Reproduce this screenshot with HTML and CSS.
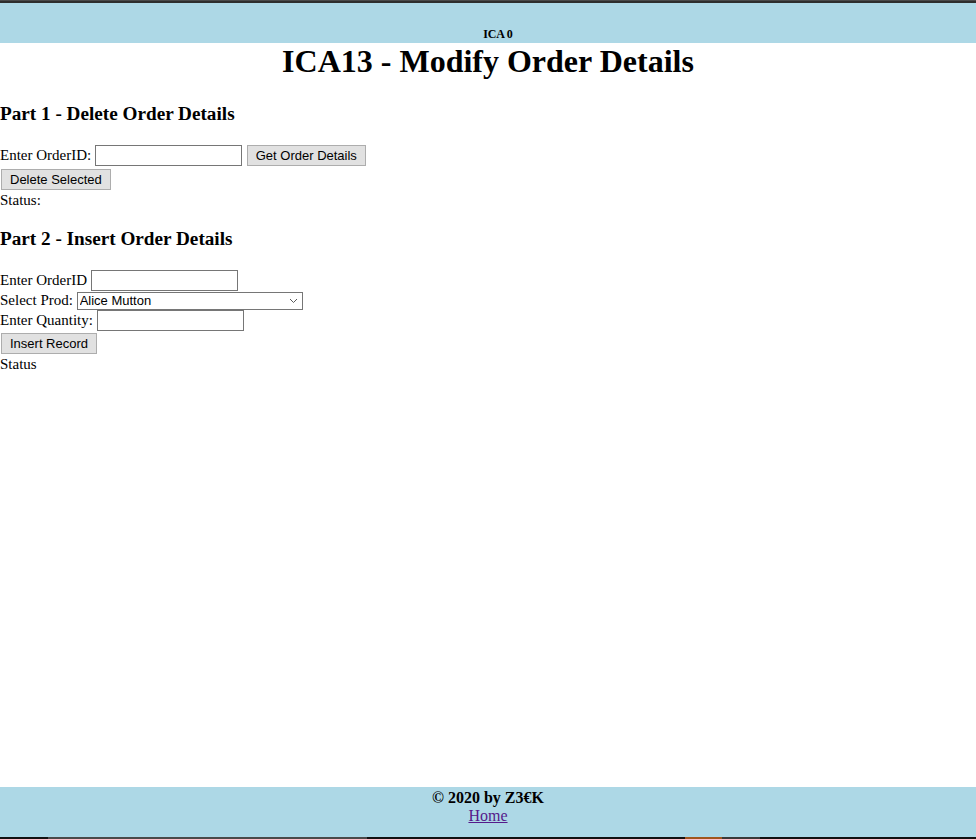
FILE: index.html
```html
<!DOCTYPE html>
<html>
<head>
<meta charset="utf-8">
<title>ICA13 - Modify Order Details</title>
<link rel="stylesheet" href="styles.css">
</head>
<body>
<div class="frame-top"></div>
<header class="banner"><h6 class="banner-title">ICA 0</h6></header>
<main class="content">
  <h1 class="page-title">ICA13 - Modify Order Details</h1>
  <section class="part part-first">
    <h3 class="part-title">Part 1 - Delete Order Details</h3>
    <div class="row">Enter OrderID: <input class="field" type="text"> <button class="btn" type="button">Get Order Details</button></div>
    <div class="row"><button class="btn" type="button">Delete Selected</button></div>
    <div class="row">Status:</div>
  </section>
  <section class="part part-second">
    <h3 class="part-title">Part 2 - Insert Order Details</h3>
    <div class="row">Enter OrderID <input class="field" type="text"></div>
    <div class="row">Select Prod: <span class="select-wrap"><select class="dropdown"><option>Alice Mutton</option></select><svg class="chev" width="9" height="6" viewBox="0 0 9 6"><path d="M1 1 L4.5 4.5 L8 1" fill="none" stroke="#5a5a5a" stroke-width="1"/></svg></span></div>
    <div class="row">Enter Quantity: <input class="field" type="text"></div>
    <div class="row"><button class="btn" type="button">Insert Record</button></div>
    <div class="row">Status</div>
  </section>
</main>
<footer class="footer">
  <div class="copy">© 2020 by Z3€K</div>
  <a class="home" href="#">Home</a>
</footer>
<div class="frame-bottom">
  <span class="seg seg-a"></span>
  <span class="seg seg-b"></span>
  <span class="seg seg-c"></span>
</div>
</body>
</html>
```
FILE: styles.css
```css
html, body {
  margin: 0;
  padding: 0;
}
body {
  font-family: "Liberation Serif", "Times New Roman", serif;
  font-size: 16px;
  color: #000;
  background: #fff;
  display: flex;
  flex-direction: column;
  min-height: 100vh;
}
.frame-top {
  height: 3px;
  background: #2e2e2e;
  border-top: 1px solid #4a4a4a;
  box-sizing: border-box;
}
.banner {
  background: #add8e6;
  height: 40px;
  display: flex;
  align-items: flex-end;
  justify-content: center;
  padding-bottom: 1px;
  padding-left: 20px;
  box-sizing: border-box;
}
.banner-title {
  margin: 0;
  font-size: 12px;
  font-weight: bold;
  letter-spacing: -0.2px;
}
.content {
  flex: 1;
}
.page-title {
  margin: 0 0 21px;
  font-size: 32px;
  text-align: center;
}
.part-title {
  font-size: 19.2px;
}
.part-first .part-title {
  margin: 23px 0 18px;
}
.part-second .part-title {
  margin: 19px 0 20px;
}
.row {
  line-height: 18px;
  font-size: 15px;
}
.field {
  font-family: "Liberation Sans", Arial, sans-serif;
  font-size: 13.33px;
  width: 147px;
  height: 21px;
  box-sizing: border-box;
  border: 1px solid #767676;
  padding: 1px 2px;
  margin: 0;
  vertical-align: baseline;
}
.btn {
  font-family: "Liberation Sans", Arial, sans-serif;
  font-size: 13px;
  background: #e1e1e1;
  border: 1px solid #adadad;
  padding: 2px 8px;
  height: 21px;
  box-sizing: border-box;
  margin: 2px 0 1px 1px;
  color: #000;
}
.select-wrap {
  position: relative;
  display: inline-block;
}
.dropdown {
  font-family: "Liberation Sans", Arial, sans-serif;
  font-size: 13px;
  width: 226px;
  height: 18px;
  box-sizing: border-box;
  border: 1px solid #767676;
  background: #fff;
  padding: 0 2px;
  margin: 0;
  appearance: none;
  -webkit-appearance: none;
  border-radius: 0;
  color: #000;
}
.chev {
  position: absolute;
  right: 5px;
  top: 7px;
  pointer-events: none;
}
.footer {
  background: #add8e6;
  text-align: center;
  height: 50px;
  box-sizing: border-box;
  padding-top: 2px;
}
.copy {
  font-weight: bold;
  line-height: 18px;
}
.home {
  color: #551a8b;
  line-height: 18px;
}
.frame-bottom {
  height: 2px;
  background: #111;
  position: relative;
}
.seg {
  position: absolute;
  top: 0;
  height: 2px;
}
.seg-a { left: 48px; width: 319px; background: #4a4a4a; }
.seg-b { left: 685px; width: 37px; background: #a0561e; }
.seg-c { left: 722px; width: 38px; background: #3a3a3a; }
```
